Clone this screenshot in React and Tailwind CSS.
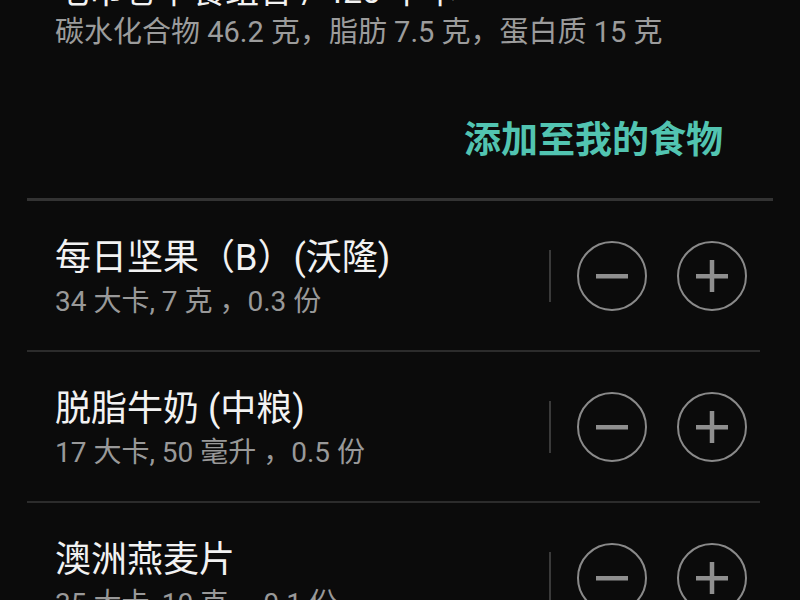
import React from 'react';

const foods = [
  { name: '每日坚果（B）(沃隆)', info: '34 大卡, 7 克 ，0.3 份' },
  { name: '脱脂牛奶 (中粮)', info: '17 大卡, 50 毫升 ，0.5 份' },
  { name: '澳洲燕麦片', info: '35 大卡, 10 克 ，0.1 份' },
];

function RoundButton({ plus }) {
  return (
    <button className="w-[70px] h-[70px] rounded-full border-[2.5px] border-[#8a8a8a] flex items-center justify-center">
      <svg width="32" height="32" viewBox="0 0 32 32">
        <rect x="0" y="14" width="32" height="4.5" fill="#8f8f8f" />
        {plus && <rect x="13.75" y="0" width="4.5" height="32" fill="#8f8f8f" />}
      </svg>
    </button>
  );
}

export default function App() {
  return (
    <div
      className="w-[800px] h-[600px] overflow-hidden bg-[#0b0b0b]"
      style={{ fontFamily: 'Roboto, "Noto Sans CJK SC", sans-serif' }}
    >
      {/* Summary header */}
      <div className="px-[55px]">
        <div className="-mt-[30px] text-[34px] leading-[42px] text-[#f2f2f2] whitespace-nowrap">
          毛巾卷早餐组合 / 420 千卡
        </div>
        <div className="text-[29px] leading-[30px] text-[#9c9c9c] mt-[5px] whitespace-nowrap">
          碳水化合物 46.2 克，脂肪 7.5 克，蛋白质 15 克
        </div>
      </div>

      <div className="flex justify-end pr-[77px] mt-[74px]">
        <span className="text-[37px] leading-[40px] font-bold text-[#52c4b1]">添加至我的食物</span>
      </div>

      <div className="mx-[27px] mt-[37px] h-[3px] bg-[#333333]" />

      {/* Food list */}
      <div className="ml-[27px] mr-[40px]">
        {foods.map((f) => (
          <div key={f.name} className="h-[151px] flex items-center border-b-2 border-[#2c2c2c] pl-[28px] pr-[13px]">
            <div className="flex-1 pt-[6px]">
              <div className="text-[36px] leading-[44px] text-[#f2f2f2] whitespace-nowrap">{f.name}</div>
              <div className="text-[28px] leading-[40px] mt-[2px] text-[#999999] whitespace-nowrap">{f.info}</div>
            </div>
            <div className="w-[2px] h-[52px] bg-[#3a3a3a] mr-[26px]" />
            <div className="flex gap-[30px]">
              <RoundButton />
              <RoundButton plus />
            </div>
          </div>
        ))}
      </div>
    </div>
  );
}
